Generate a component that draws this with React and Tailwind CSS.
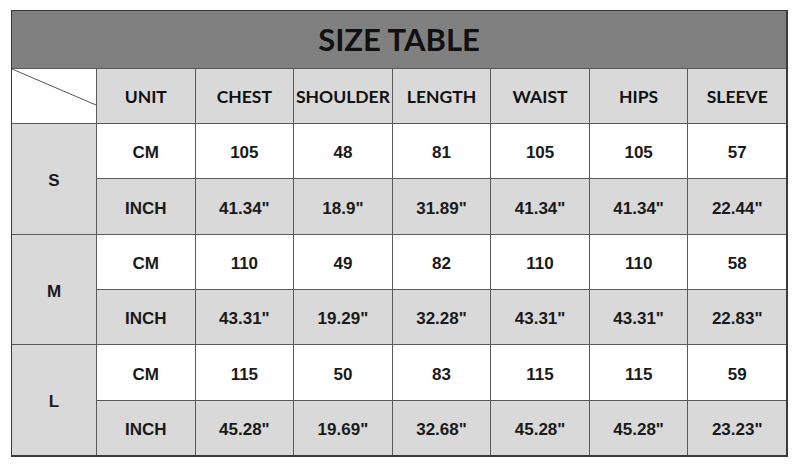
const columns = ['UNIT', 'CHEST', 'SHOULDER', 'LENGTH', 'WAIST', 'HIPS', 'SLEEVE']

const sizes = [
  {
    size: 'S',
    cm: ['105', '48', '81', '105', '105', '57'],
    inch: ['41.34"', '18.9"', '31.89"', '41.34"', '41.34"', '22.44"'],
  },
  {
    size: 'M',
    cm: ['110', '49', '82', '110', '110', '58'],
    inch: ['43.31"', '19.29"', '32.28"', '43.31"', '43.31"', '22.83"'],
  },
  {
    size: 'L',
    cm: ['115', '50', '83', '115', '115', '59'],
    inch: ['45.28"', '19.69"', '32.68"', '45.28"', '45.28"', '23.23"'],
  },
]

const cell = 'flex items-center justify-center'
const dataFont = "font-['Liberation_Sans',Arial,sans-serif] text-[17px] font-bold text-[#1a1a1a] pt-[4px]"

function App() {
  return (
    <div className="h-[470px] w-[800px] bg-white pl-[11px] pt-[10px]">
      <div className="grid w-[777px] grid-cols-[84px_repeat(7,1fr)] grid-rows-[57px_54px_repeat(6,54.34px)] gap-px border-b-2 border-l border-r-2 border-t border-[#3a3a3a] bg-[#5a5a5a]">
        <div
          className={`${cell} col-span-8 bg-[#808080] font-['Lato',sans-serif] text-[31px] font-bold text-[#111]`}
        >
          SIZE TABLE
        </div>

        <div className="relative bg-white">
          <svg className="absolute inset-0 h-full w-full" viewBox="0 0 84 54" preserveAspectRatio="none">
            <line x1="0" y1="0" x2="84" y2="36" stroke="#555" strokeWidth="1" />
          </svg>
        </div>
        {columns.map((name) => (
          <div
            key={name}
            className={`${cell} bg-[#d9d9d9] pt-[2px] font-['Lato',sans-serif] text-[17.5px] font-bold text-[#111]`}
          >
            {name}
          </div>
        ))}

        {sizes.map((row) => (
          <>
            <div
              key={row.size}
              className={`${cell} row-span-2 bg-[#d9d9d9] ${dataFont}`}
            >
              {row.size}
            </div>
            <div className={`${cell} bg-white ${dataFont}`}>CM</div>
            {row.cm.map((value, i) => (
              <div key={`cm-${row.size}-${i}`} className={`${cell} bg-white ${dataFont}`}>
                {value}
              </div>
            ))}
            <div className={`${cell} bg-[#d9d9d9] ${dataFont}`}>INCH</div>
            {row.inch.map((value, i) => (
              <div key={`in-${row.size}-${i}`} className={`${cell} bg-[#d9d9d9] ${dataFont}`}>
                {value}
              </div>
            ))}
          </>
        ))}
      </div>
    </div>
  )
}

export default App
